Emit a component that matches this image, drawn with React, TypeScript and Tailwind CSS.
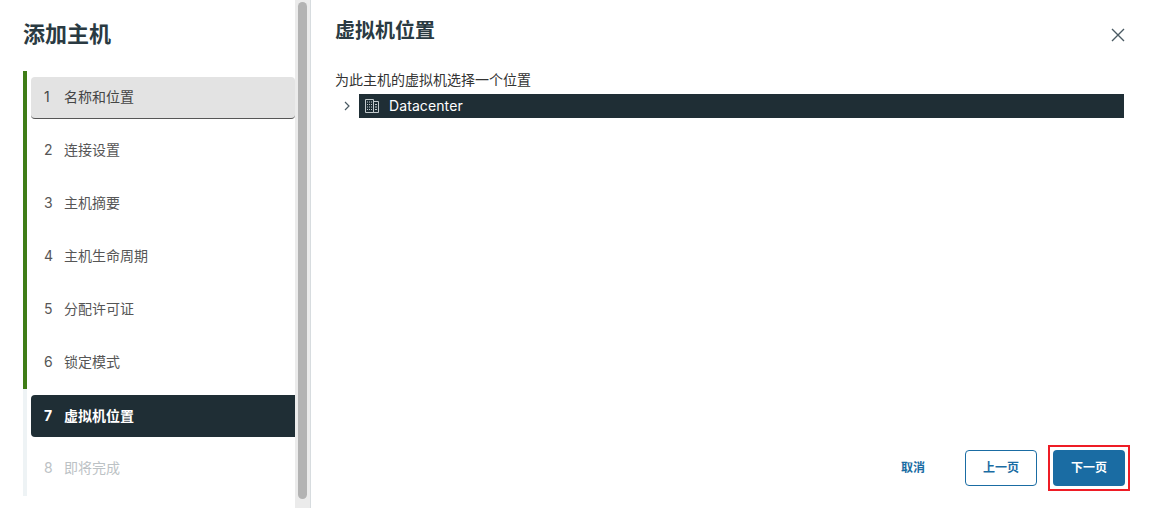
const STEPS = [
  { n: 1, label: "名称和位置", state: "done", selected: true },
  { n: 2, label: "连接设置", state: "done" },
  { n: 3, label: "主机摘要", state: "done" },
  { n: 4, label: "主机生命周期", state: "done" },
  { n: 5, label: "分配许可证", state: "done" },
  { n: 6, label: "锁定模式", state: "done" },
  { n: 7, label: "虚拟机位置", state: "current" },
  { n: 8, label: "即将完成", state: "todo" },
];

function StepRow({ step }: { step: (typeof STEPS)[number] }) {
  let row = "rounded-[4px] text-[#565656] pb-[4px]";
  if (step.selected) row = "rounded-[4px] bg-[#e3e3e3] border-b border-[#565656] text-[#454545] pb-[2px]";
  if (step.state === "current") row = "rounded-l-[4px] bg-[#1f2e35] text-white font-bold pb-[2px]";
  if (step.state === "todo") row = "rounded-[4px] text-[#bcc2c5] pb-[4px]";
  return (
    <li
      className={
        "border-l-4 pl-1 pt-[6px] " +
        (step.state === "done" ? "border-[#3f7d17] h-[53px]" : "border-[#eef3f5]") +
        (step.state === "current" ? " h-[53px]" : "") +
        (step.state === "todo" ? " h-[54px]" : "")
      }
    >
      <div className={"flex h-[42px] items-center pl-[13px] text-[14px] " + row}>
        <span className="w-[20px]">{step.n}</span>
        <span>{step.label}</span>
      </div>
    </li>
  );
}

export default function App() {
  return (
    <div className="flex h-[508px] w-[1149px] overflow-hidden bg-white font-['Inter','Noto_Sans_CJK_SC',sans-serif] text-[#1f2e35]">
      <aside className="flex w-[295px] shrink-0 flex-col pl-[23px]">
        <h1 className="mt-[19px] h-[52px] text-[22px] leading-[30px] font-semibold text-[#2a3a42]">添加主机</h1>
        <ol>
          {STEPS.map((s) => (
            <StepRow key={s.n} step={s} />
          ))}
        </ol>
      </aside>
      <div className="w-[15px] shrink-0 bg-[#ebebeb] px-[3px] pt-[2px]">
        <div className="h-[497px] rounded-full bg-[#b3b3b3]" />
      </div>
      <main className="flex flex-1 flex-col border-l border-[#d7dcdf] pl-[24px] pr-[25px]">
        <div className="mt-[17px] flex items-start justify-between">
          <h2 className="text-[20px] leading-[28px] font-semibold text-[#2a3a42]">虚拟机位置</h2>
          <svg className="mt-[11px] mr-[-1px]" width="14" height="14" viewBox="0 0 14 14" fill="none" stroke="#4a5a63" strokeWidth="1.4">
            <path d="M1 1l12 12M13 1L1 13" />
          </svg>
        </div>
        <p className="mt-[26px] text-[14px] leading-[18px] text-[#333]">为此主机的虚拟机选择一个位置</p>
        <div className="mt-[5px] flex items-center">
          <svg className="ml-[8px] mr-[8px]" width="8" height="10" viewBox="0 0 8 10" fill="none" stroke="#4a5a63" strokeWidth="1.2">
            <path d="M2 1l4 4-4 4" />
          </svg>
          <div className="flex h-[24px] flex-1 items-center bg-[#1f2e35] pb-[1px] pl-[6px] text-[14px] tracking-[0.1px] text-white">
            <svg className="mr-[10px]" width="14" height="16" viewBox="0 0 14 16" fill="none" stroke="#c3cacd" strokeWidth="1">
              <path d="M.5 1.500h8v13h-8zM8.500 3.500h5v11h-5z" />
              <path d="M2 4h1M4 4h1M6 4h1M2 6.500h1M4 6.500h1M6 6.500h1M2 9h1M4 9h1M6 9h1M2 11.500h1M4 11.500h1M6 11.500h1M10 6.500h2M10 9h2M10 11.500h2" />
            </svg>
            Datacenter
          </div>
        </div>
        <div className="mt-auto mb-[17px] mr-[-6px] flex items-center justify-end text-[12px] font-bold">
          <button className="mr-[40px] text-[#1a6ca3]">取消</button>
          <button className="mr-[11px] h-[36px] w-[72px] rounded-[4px] border border-[#1a6ca3] text-[#1a6ca3]">上一页</button>
          <div className="border-2 border-[#ee1c25] p-[3px]">
            <button className="block h-[36px] w-[72px] rounded-[4px] bg-[#1a6ca3] text-white">下一页</button>
          </div>
        </div>
      </main>
    </div>
  );
}
